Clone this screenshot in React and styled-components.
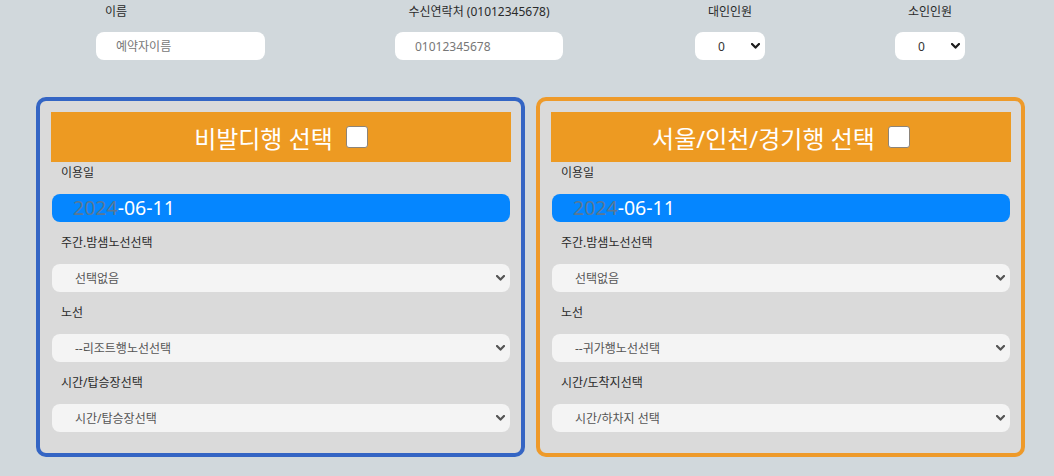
import styled, { createGlobalStyle } from 'styled-components';

const GlobalStyle = createGlobalStyle`
  body {
    margin: 0;
    background: #d1d8dc;
    font-family: "Noto Sans", "Noto Sans CJK KR", sans-serif;
    color: #2a2a2a;
  }
`;

function Chevron({ color }) {
  return (
    <ChevronIcon width="9" height="6" viewBox="0 0 9 6">
      <polyline
        points="1,1 4.5,4.6 8,1"
        fill="none"
        stroke={color}
        strokeWidth="2.2"
        strokeLinecap="round"
        strokeLinejoin="round"
      />
    </ChevronIcon>
  );
}

function App() {
  return (
    <Page>
      <GlobalStyle />
      <TopRow>
        <Field>
          <TopLabel $left>이름</TopLabel>
          <TextInput $w={169} placeholder="예약자이름" />
        </Field>
        <Field>
          <TopLabel>수신연락처 (01012345678)</TopLabel>
          <TextInput $w={168} placeholder="01012345678" />
        </Field>
        <Field>
          <TopLabel>대인인원</TopLabel>
          <SelectWrap $w={70}>
            <CountSelect defaultValue="0">
              <option value="0">0</option>
            </CountSelect>
            <Chevron color="#1d1d1d" />
          </SelectWrap>
        </Field>
        <Field>
          <TopLabel>소인인원</TopLabel>
          <SelectWrap $w={70}>
            <CountSelect defaultValue="0">
              <option value="0">0</option>
            </CountSelect>
            <Chevron color="#1d1d1d" />
          </SelectWrap>
        </Field>
      </TopRow>

      <Panels>
        <Panel $border="#3465c4">
          <PanelHeader>
            비발디행 선택
            <HeaderCheck type="checkbox" />
          </PanelHeader>
          <DateLabel>이용일</DateLabel>
          <DateBox>
            <Year>2024</Year>-06-11
          </DateBox>
          <FieldLabel>주간.밤샘노선선택</FieldLabel>
          <SelectWrap>
            <PanelSelect>
              <option>선택없음</option>
            </PanelSelect>
            <Chevron color="#555" />
          </SelectWrap>
          <FieldLabel>노선</FieldLabel>
          <SelectWrap>
            <PanelSelect>
              <option>--리조트행노선선택</option>
            </PanelSelect>
            <Chevron color="#555" />
          </SelectWrap>
          <FieldLabel>시간/탑승장선택</FieldLabel>
          <SelectWrap>
            <PanelSelect>
              <option>시간/탑승장선택</option>
            </PanelSelect>
            <Chevron color="#555" />
          </SelectWrap>
        </Panel>

        <Panel $border="#ee9a2a">
          <PanelHeader>
            서울/인천/경기행 선택
            <HeaderCheck type="checkbox" />
          </PanelHeader>
          <DateLabel>이용일</DateLabel>
          <DateBox>
            <Year>2024</Year>-06-11
          </DateBox>
          <FieldLabel>주간.밤샘노선선택</FieldLabel>
          <SelectWrap>
            <PanelSelect>
              <option>선택없음</option>
            </PanelSelect>
            <Chevron color="#555" />
          </SelectWrap>
          <FieldLabel>노선</FieldLabel>
          <SelectWrap>
            <PanelSelect>
              <option>--귀가행노선선택</option>
            </PanelSelect>
            <Chevron color="#555" />
          </SelectWrap>
          <FieldLabel>시간/도착지선택</FieldLabel>
          <SelectWrap>
            <PanelSelect>
              <option>시간/하차지 선택</option>
            </PanelSelect>
            <Chevron color="#555" />
          </SelectWrap>
        </Panel>
      </Panels>
    </Page>
  );
}

// --------Styles-------

const Page = styled.div`
  width: 1054px;
  height: 476px;
  overflow: hidden;
`;

const TopRow = styled.div`
  display: grid;
  grid-template-columns: 299px 300px 200px 200px;
  padding-left: 96px;
`;

const Field = styled.div`
  display: flex;
  flex-direction: column;
  align-items: center;
  justify-self: start;
`;

const TopLabel = styled.div`
  align-self: ${p => (p.$left ? 'flex-start' : 'center')};
  margin-left: ${p => (p.$left ? '9px' : '0')};
  height: 24px;
  line-height: 24px;
  font-size: 12px;
  white-space: nowrap;
  margin-bottom: 8px;
`;

const TextInput = styled.input`
  box-sizing: border-box;
  width: ${p => p.$w}px;
  height: 28px;
  border: none;
  outline: none;
  border-radius: 8px;
  background: #fff;
  padding: 0 0 0 20px;
  font: inherit;
  font-size: 12px;
  color: #333;

  &::placeholder {
    color: #777;
  }
`;

const SelectWrap = styled.div`
  position: relative;
  width: ${p => (p.$w ? `${p.$w}px` : 'auto')};
  margin: ${p => (p.$w ? '0' : '0 1px')};
`;

const ChevronIcon = styled.svg`
  position: absolute;
  right: 5px;
  top: 50%;
  margin-top: -3px;
  pointer-events: none;
`;

const CountSelect = styled.select`
  appearance: none;
  box-sizing: border-box;
  width: 100%;
  height: 28px;
  border: none;
  outline: none;
  border-radius: 8px;
  background: #fff;
  padding: 0 0 0 23px;
  font: inherit;
  font-size: 12px;
  color: #333;
`;

const Panels = styled.div`
  display: flex;
  gap: 11px;
  padding-left: 36px;
  margin-top: 37px;
`;

const Panel = styled.section`
  box-sizing: border-box;
  width: 489px;
  border: 4px solid ${p => p.$border};
  border-radius: 10px;
  background: #dadada;
  padding: 11px 10px 21px 11px;
`;

const PanelHeader = styled.div`
  display: flex;
  align-items: center;
  justify-content: center;
  gap: 13px;
  height: 50px;
  background: #ed9a22;
  color: #fff;
  font-size: 24px;
  white-space: nowrap;
`;

const HeaderCheck = styled.input`
  appearance: none;
  box-sizing: border-box;
  width: 22px;
  height: 22px;
  margin: 0;
  background: #fff;
  border: 1px solid #8d8478;
  border-radius: 3px;
`;

const DateLabel = styled.div`
  padding-left: 10px;
  height: 22px;
  line-height: 22px;
  font-size: 12px;
`;

const DateBox = styled.div`
  margin: 10px 1px 0;
  height: 28px;
  line-height: 27px;
  border-radius: 8px;
  background: #0586ff;
  padding-left: 21px;
  color: #fff;
  font-size: 19.5px;
`;

const Year = styled.span`
  color: #5b7894;
`;

const FieldLabel = styled.div`
  padding-left: 10px;
  height: 42px;
  line-height: 42px;
  font-size: 12px;
`;

const PanelSelect = styled.select`
  appearance: none;
  box-sizing: border-box;
  width: 100%;
  height: 28px;
  border: none;
  outline: none;
  border-radius: 8px;
  background: #f4f4f4;
  padding: 0 0 0 23px;
  font: inherit;
  font-size: 12px;
  color: #555;
`;

export default App;
